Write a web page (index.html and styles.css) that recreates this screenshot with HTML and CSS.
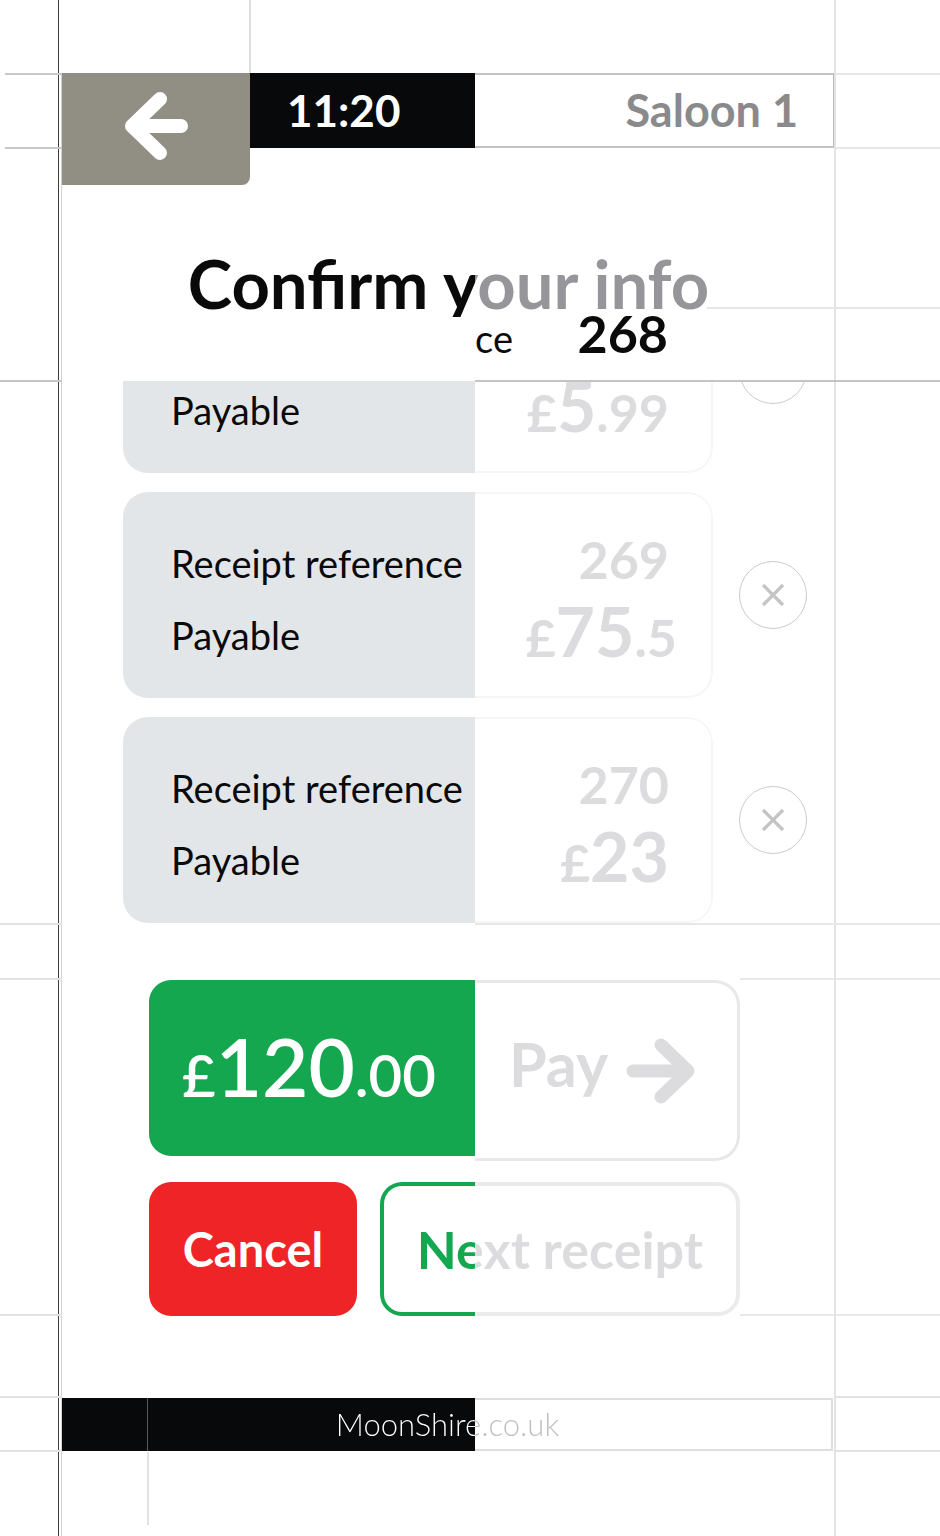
FILE: index.html
```html
<!DOCTYPE html>
<html lang="en">
<head>
<meta charset="utf-8">
<title>Confirm your info</title>
<link rel="stylesheet" href="styles.css">
</head>
<body>
<div class="page">
  <main class="app">
    <header class="topbar">
      <button class="back" aria-label="Back">
        <svg viewBox="0 0 188 112" width="188" height="112"><path d="M119 53H70M98 26L70 53L98 80" fill="none" stroke="#fff" stroke-width="14" stroke-linecap="round" stroke-linejoin="round"/></svg>
      </button>
      <div class="clock">11:20</div>
      <div class="saloon">Saloon 1</div>
    </header>

    <section class="intro">
      <h1 class="title">Confirm your info</h1>
      <div class="peek">
        <span class="peek-clip"><span>Receipt reference</span></span>
        <span class="peek-ref">268</span>
      </div>
    </section>

    <section class="viewport">
      <div class="list">
        <div class="receipt">
          <div class="receipt-body">
            <div class="labels"><div class="label">Receipt reference</div><div class="label">Payable</div></div>
            <div class="values"><div class="ref">268</div><div class="amount"><span class="cur">£</span><span class="major">5</span><span class="minor">.99</span></div></div>
          </div>
          <button class="remove" aria-label="Remove"><svg viewBox="0 0 24 24" width="24" height="24"><path d="M2 2L22 22M22 2L2 22" stroke="#c4c4c4" stroke-width="3.2"/></svg></button>
        </div>
        <div class="receipt">
          <div class="receipt-body">
            <div class="labels"><div class="label">Receipt reference</div><div class="label">Payable</div></div>
            <div class="values"><div class="ref">269</div><div class="amount amount-wide"><span class="cur">£</span><span class="major">75</span><span class="minor">.5</span></div></div>
          </div>
          <button class="remove" aria-label="Remove"><svg viewBox="0 0 24 24" width="24" height="24"><path d="M2 2L22 22M22 2L2 22" stroke="#c4c4c4" stroke-width="3.2"/></svg></button>
        </div>
        <div class="receipt">
          <div class="receipt-body">
            <div class="labels"><div class="label">Receipt reference</div><div class="label">Payable</div></div>
            <div class="values"><div class="ref">270</div><div class="amount"><span class="cur">£</span><span class="major">23</span></div></div>
          </div>
          <button class="remove" aria-label="Remove"><svg viewBox="0 0 24 24" width="24" height="24"><path d="M2 2L22 22M22 2L2 22" stroke="#c4c4c4" stroke-width="3.2"/></svg></button>
        </div>
      </div>
    </section>

    <div class="pay-row">
      <div class="pay-amount"><span class="cur">£</span><span class="major">120</span><span class="minor">.00</span></div>
      <button class="pay-go"><span class="pay-label">Pay</span>
        <svg viewBox="0 0 70 66" width="70" height="66"><path d="M7 33H62M35 7L62 33L35 59" fill="none" stroke="#dcdcde" stroke-width="13" stroke-linecap="round" stroke-linejoin="round"/></svg>
      </button>
    </div>

    <div class="btn-row">
      <button class="cancel">Cancel</button>
      <button class="next"><span class="next-text">Next receipt</span></button>
    </div>

    <footer class="footer"><span class="footer-text">MoonShire.co.uk</span></footer>
  </main>

  <div class="guides">
    <div class="guide g-v58"></div>
    <div class="guide g-v61"></div>
    <div class="guide g-v249"></div>
    <div class="guide g-v834"></div>
    <div class="guide g-v147"></div>
    <div class="guide g-h73a"></div>
    <div class="guide g-h73b"></div>
    <div class="guide g-h147a"></div>
    <div class="guide g-h147b"></div>
    <div class="guide g-h307"></div>
    <div class="guide g-h380a"></div>
    <div class="guide g-h380b"></div>
    <div class="guide g-h923a"></div>
    <div class="guide g-h923b"></div>
    <div class="guide g-h978a"></div>
    <div class="guide g-h978b"></div>
    <div class="guide g-h1314a"></div>
    <div class="guide g-h1314b"></div>
    <div class="guide g-h1396a"></div>
    <div class="guide g-h1396b"></div>
    <div class="guide g-h1450a"></div>
    <div class="guide g-h1450b"></div>
  </div>
</div>
</body>
</html>
```

FILE: styles.css
```css
* { box-sizing: border-box; }
html, body { margin: 0; padding: 0; background: #fff; }
body { font-family: Lato, "Open Sans", "DejaVu Sans", sans-serif; color: #0a0a0a; }
button { font: inherit; margin: 0; cursor: pointer; }

.page { position: relative; width: 940px; height: 1536px; overflow: hidden; }

.app { width: 773px; margin-left: 62px; padding-top: 73px; }

/* Top bar */
.topbar { display: flex; align-items: flex-start; height: 112px; }
.back { width: 188px; height: 112px; padding: 0; border: none; background: #918f84; border-bottom-right-radius: 8px; display: block; }
.back svg { display: block; }
.clock { width: 225px; height: 75px; background: #08090b; color: #fff; font-size: 44px; font-weight: 700; line-height: 75px; padding-left: 37px; }
.saloon { flex: 1; height: 75px; border-top: 2px solid #c3c3c3; border-bottom: 2px solid #c3c3c3; border-right: 2px solid #b9b9b9; color: #8a8a8d; font-size: 45px; font-weight: 700; line-height: 71px; text-align: right; padding-right: 35px; }

/* Intro */
.intro { height: 196px; padding-top: 65px; }
.title { margin: 0; font-size: 67px; line-height: 67px; font-weight: 700; text-align: center;
  background: linear-gradient(to right, #0a0a0a 413px, #95959a 413px);
  -webkit-background-clip: text; background-clip: text; color: transparent; }
.peek { display: flex; align-items: baseline; justify-content: space-between; width: 192px; margin: -10px 0 0 414px; }
.peek-clip { display: flex; justify-content: flex-end; width: 37px; overflow: hidden; font-size: 38px; line-height: 38px; white-space: nowrap; }
.peek-clip span { flex-shrink: 0; }
.peek-ref { font-size: 52px; line-height: 52px; font-weight: 700; }

/* Receipt list */
.viewport { height: 543px; overflow: hidden; padding-left: 61px; }
.list { display: flex; flex-direction: column; gap: 19px; margin-top: -114px; }
.receipt { display: flex; align-items: center; }
.receipt-body { display: flex; width: 590px; height: 206px; border-radius: 25px; overflow: hidden; }
.labels { width: 352px; background: #e3e6e9; padding: 35px 0 0 48px; font-size: 38px; line-height: 72px; white-space: nowrap; }
.values { flex: 1; background: #fff; border: 2px solid #f6f6f6; border-left: none; border-radius: 0 25px 25px 0; padding: 29px 42px 0 0; text-align: right; color: #dcdcde; font-weight: 700; }
.ref { font-size: 52px; line-height: 72px; }
.amount { font-size: 68px; line-height: 72px; }
.amount .cur, .amount .minor { font-size: 52px; }
.amount-wide { margin-right: -8px; }
.remove { width: 68px; height: 68px; margin-left: 26px; padding: 0; border: 1.5px solid #cbcbcb; border-radius: 50%; background: #fff; display: grid; place-items: center; }
.remove svg { display: block; }

/* Pay */
.pay-row { display: flex; align-items: flex-start; margin: 56px 0 0 87px; }
.pay-amount { width: 326px; height: 176px; background: #15a650; border-radius: 22px 0 0 22px; color: #fff; padding-left: 33px; font-size: 80px; line-height: 172px; font-weight: 600; white-space: nowrap; }
.pay-amount .cur, .pay-amount .minor { font-size: 58px; }
.pay-go { width: 265px; height: 181px; background: #fff; border: 3px solid #e8e8e8; border-left: none; border-radius: 0 25px 25px 0; display: flex; align-items: center; gap: 18px; padding: 0 0 0 34px; }
.pay-label { font-size: 61px; line-height: 61px; font-weight: 700; color: #dcdcde; margin-bottom: 14px; }
.pay-go svg { display: block; }

/* Buttons */
.btn-row { display: flex; gap: 23px; margin: 21px 0 0 87px; }
.cancel { width: 208px; height: 134px; border: none; border-radius: 22px; background: #ee2426; color: #fff; font-size: 47px; font-weight: 700; padding: 0; }
.next { width: 360px; height: 134px; padding: 0; border: 4px solid transparent; border-radius: 22px;
  background: linear-gradient(#fff, #fff) padding-box, linear-gradient(to right, #15a650 95px, #ebebeb 95px) border-box; }
.next-text { display: block; font-size: 52px; font-weight: 700; text-align: center;
  background: linear-gradient(to right, #15a650 91px, #dcdcde 91px);
  -webkit-background-clip: text; background-clip: text; color: transparent; }

/* Footer */
.footer { position: relative; display: block; width: 771px; height: 53px; margin-top: 82px;
  background: linear-gradient(to right, #08090b 413px, transparent 413px); }
.footer::before { content: ""; position: absolute; left: 85px; top: 0; bottom: 0; width: 1px; background: #5a5a5a; }
.footer::after { content: ""; position: absolute; left: 413px; right: 0; top: 0; bottom: 0; border: 2px solid #dedede; border-left: none; }
.footer-text { display: block; font-size: 31px; font-weight: 300; line-height: 53px; text-align: center;
  background: linear-gradient(to right, #fff 413px, #bdbdbd 413px);
  -webkit-background-clip: text; background-clip: text; color: transparent; }

/* Guide lines of the canvas */
.guides { position: absolute; inset: 0; pointer-events: none; }
.guide { position: absolute; background: #e4e4e4; }
.g-v58 { left: 58px; top: 0; width: 1px; height: 1536px; background: #3c3c3c; }
.g-v61 { left: 61px; top: 73px; width: 1px; height: 1463px; background: #d2d2d2; }
.g-v249 { left: 249px; top: 0; width: 2px; height: 73px; background: #dedede; }
.g-v834 { left: 834px; top: 0; width: 2px; height: 1536px; background: #e3e3e3; }
.g-v147 { left: 147px; top: 1452px; width: 2px; height: 73px; background: #e3e3e3; }
.g-h73a { left: 5px; top: 73px; width: 57px; height: 2px; background: #c9c9c9; }
.g-h73b { left: 836px; top: 73px; width: 104px; height: 2px; background: #e6e6e6; }
.g-h147a { left: 5px; top: 147px; width: 57px; height: 2px; background: #c9c9c9; }
.g-h147b { left: 836px; top: 147px; width: 104px; height: 2px; background: #e6e6e6; }
.g-h307 { left: 707px; top: 307px; width: 233px; height: 2px; background: #e6e6e6; }
.g-h380a { left: 0; top: 380px; width: 62px; height: 2px; background: #c4c4c4; }
.g-h380b { left: 475px; top: 380px; width: 465px; height: 2px; background: #c4c4c4; }
.g-h923a { left: 0; top: 923px; width: 62px; height: 2px; background: #e2e2e2; }
.g-h923b { left: 475px; top: 923px; width: 465px; height: 2px; background: #e8e8e8; }
.g-h978a { left: 0; top: 978px; width: 62px; height: 2px; background: #e2e2e2; }
.g-h978b { left: 740px; top: 978px; width: 200px; height: 2px; background: #e8e8e8; }
.g-h1314a { left: 0; top: 1314px; width: 62px; height: 2px; background: #e2e2e2; }
.g-h1314b { left: 740px; top: 1314px; width: 200px; height: 2px; background: #e8e8e8; }
.g-h1396a { left: 0; top: 1396px; width: 62px; height: 2px; background: #e2e2e2; }
.g-h1396b { left: 836px; top: 1396px; width: 104px; height: 2px; background: #e2e2e2; }
.g-h1450a { left: 0; top: 1450px; width: 62px; height: 2px; background: #e2e2e2; }
.g-h1450b { left: 836px; top: 1450px; width: 104px; height: 2px; background: #e2e2e2; }
```
